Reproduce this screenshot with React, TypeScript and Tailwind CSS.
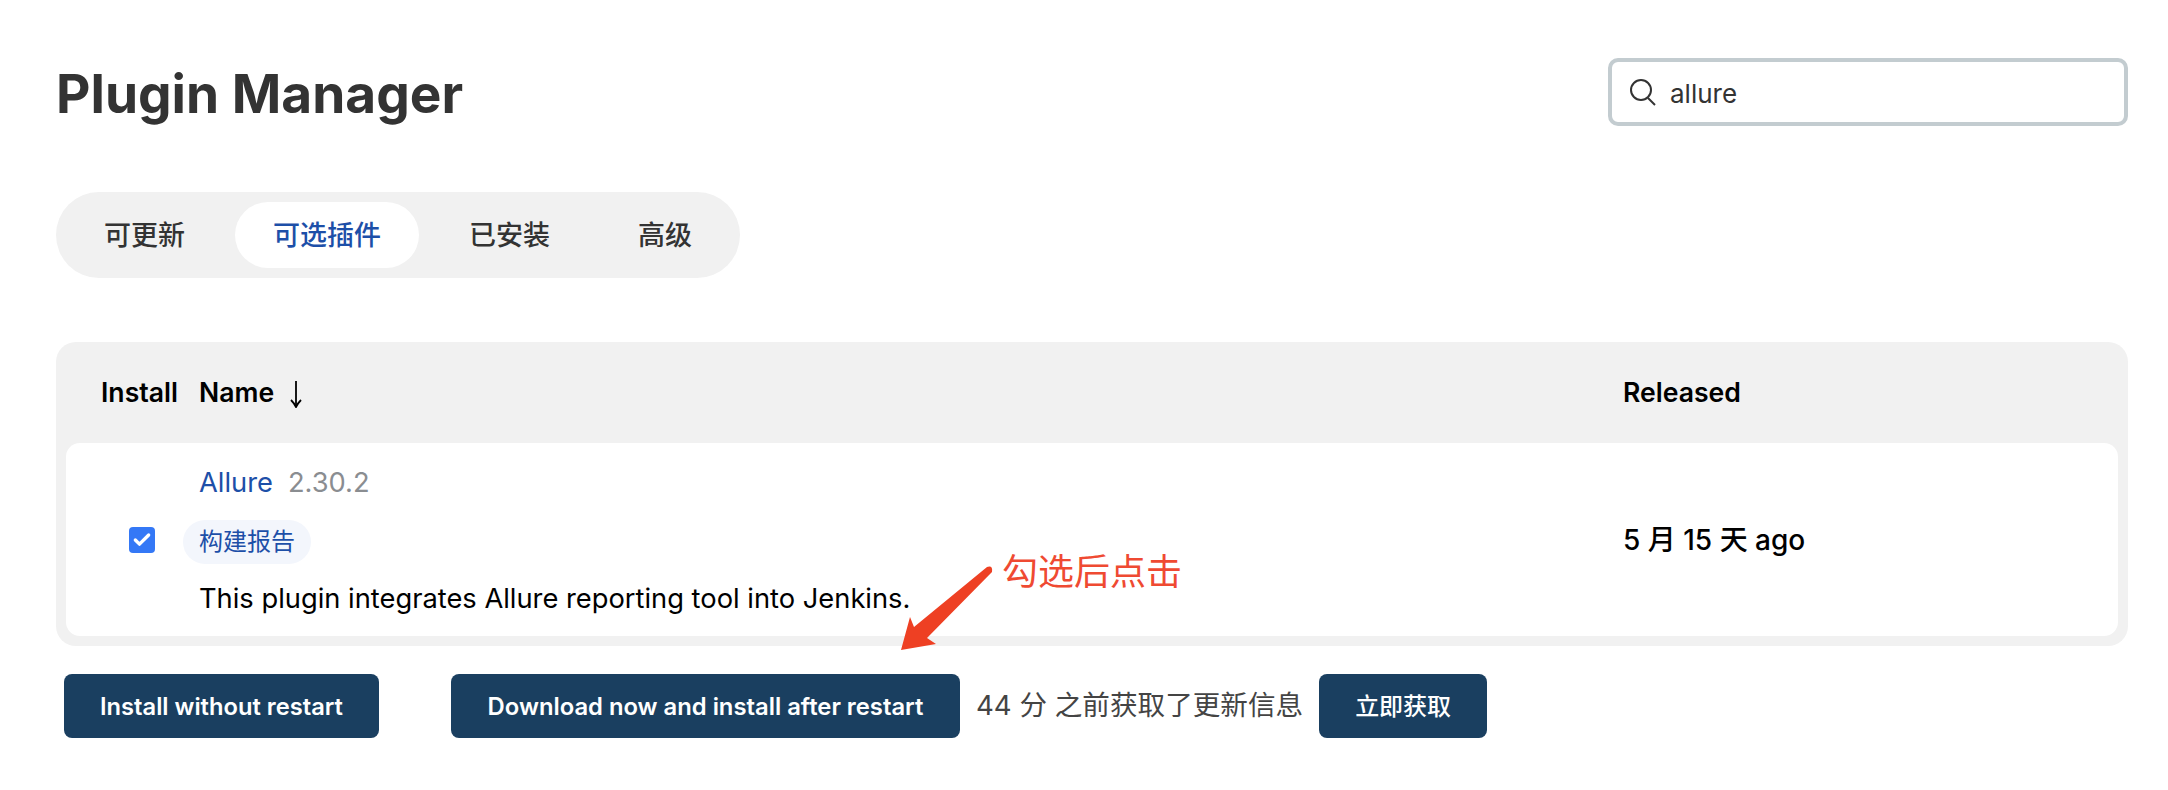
import { Check } from "lucide-react";

const cjk = '"Noto Sans CJK SC"';
const tabs = ["可更新", "可选插件", "已安装", "高级"];

function ActionButton({ label, className = "" }: { label: string; className?: string }) {
  return (
    <button
      type="button"
      className={"h-16 rounded-[8px] bg-[#1a3f60] text-white " + className}
    >
      <span className="relative top-px">{label}</span>
    </button>
  );
}

export default function App() {
  return (
    <div className="relative h-[790px] bg-white pl-14 pr-10 pt-[58px] font-['Inter','Noto_Sans_CJK_SC',sans-serif] text-[#333]">
      {/* Шапка */}
      <div className="flex items-center justify-between">
        <h1 className="h-[68px] pt-[2px] text-[53.2px] font-bold leading-[68px] text-[#333]">Plugin Manager</h1>
        <div className="flex h-[68px] w-[520px] items-center gap-[13px] rounded-[10px] border-4 border-[#c3ccd0] pl-[17px] text-[26px]">
          <svg width="28" height="28" viewBox="0 0 28 28" fill="none" stroke="#333" strokeWidth="2">
            <circle cx="12" cy="12" r="10" />
            <path d="M19 20 L26 27" />
          </svg>
          <span className="relative top-px">allure</span>
        </div>
      </div>

      {/* Вкладки */}
      <div className="mt-[66px] flex h-[86px] w-[684px] items-center gap-3 rounded-full bg-[#f1f1f1] px-[10px]">
        {tabs.map((tab, i) => (
          <div
            key={tab}
            className={
              "flex h-[66px] shrink-0 items-center whitespace-nowrap rounded-full px-[38px] pt-[2px] text-[27px] font-medium " +
              (i === 1 ? "bg-white text-[#1d4fa8]" : "text-[#333]")
            }
          >
            {tab}
          </div>
        ))}
      </div>

      {/* Таблица */}
      <div className="mt-16 rounded-[20px] bg-[#f1f1f1] px-[10px] pb-[10px] text-black">
        <div className="grid h-[101px] grid-cols-[133px_1424px_1fr] items-center text-[26.6px] font-semibold">
          <div className="pl-[35px]">Install</div>
          <div className="flex items-center gap-4">
            Name
            <svg width="12" height="28" viewBox="0 0 12 28" fill="none" stroke="#000" strokeWidth="1.8" className="mt-[3px]">
              <path d="M6 1 V26" />
              <path d="M1 20 Q4 23 6 27 Q8 23 11 20" />
            </svg>
          </div>
          <div>Released</div>
        </div>
        <div className="grid h-[193px] grid-cols-[133px_1424px_1fr] items-center rounded-[14px] bg-white">
          <div className="flex justify-center pl-[18px]">
            <div className="flex h-[26px] w-[26px] items-center justify-center rounded-[4px] bg-[#3478f6]">
              <Check size={20} strokeWidth={4} className="text-white" />
            </div>
          </div>
          <div className="flex flex-col items-start pt-[3px]">
            <div className="flex h-[44px] items-center gap-[15px] text-[27.3px]">
              <span className="text-[#1d4fa8]">Allure</span>
              <span className="text-[#8a8d91]">2.30.2</span>
            </div>
            <span className="mt-[14px] -ml-4 flex h-[44px] items-center rounded-full bg-[#f3f6fc] px-4 text-[24px] text-[#1d4fa8]">
              构建报告
            </span>
            <div className="mt-[13px] text-[27.3px] leading-[44px]">
              This plugin integrates Allure reporting tool into Jenkins.
            </div>
          </div>
          <div className="pt-[1px] text-[28px] font-medium">5 月 15 天 ago</div>
        </div>
      </div>

      {/* Кнопки */}
      <div className="mt-7 flex items-center pl-2">
        <ActionButton label="Install without restart" className="w-[315px] text-[23.7px] font-semibold" />
        <ActionButton
          label="Download now and install after restart"
          className="ml-[72px] w-[509px] text-[23.8px] font-semibold"
        />
        <span className="ml-4 text-[27.6px] text-[#444]">44 分 之前获取了更新信息</span>
        <ActionButton label="立即获取" className="ml-[16px] w-[168px] text-[24px] font-medium" />
      </div>

      {/* Аннотация поверх скриншота */}
      <svg className="absolute left-[895px] top-[560px]" width="105" height="95" viewBox="895 560 105 95">
        <path
          d="M901 650 L910 617 L914 627 L987 567 Q993 565 992 572 L927 638 L936 644 Z"
          fill="#ee4023"
        />
      </svg>
      <span
        className="absolute left-[1002px] top-[546px] text-[36px] leading-[46px] text-[#ef4a32]"
        style={{ fontFamily: cjk }}
      >
        勾选后点击
      </span>
    </div>
  );
}
